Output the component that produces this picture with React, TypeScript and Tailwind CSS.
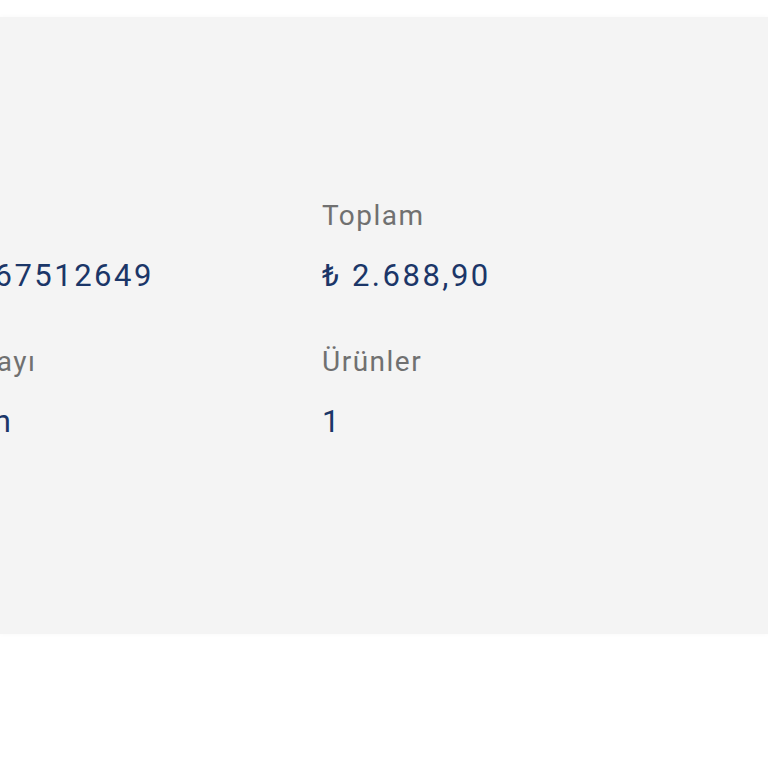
import React from "react";

interface SummaryItem {
  label: string;
  value: string;
}

const items: SummaryItem[] = [
  { label: "Sipariş", value: "100000067512649" },
  { label: "Toplam", value: "₺ 2.688,90" },
  { label: "Sipariş Onayı", value: "Onay alan" },
  { label: "Ürünler", value: "1" },
];

const App: React.FC = () => {
  return (
    <div className="w-[768px] h-[768px] bg-white overflow-hidden font-['Roboto','Liberation_Sans',sans-serif]">
      {/* ORDER SUMMARY */}
      <section className="mt-[17px] h-[617px] bg-[#f4f4f4] pt-[181px] shadow-[0_0_5px_rgba(0,0,0,0.03)]">
        <div className="ml-[-145px] grid grid-cols-[467px_auto] gap-y-[50px]">
          {items.map((item) => (
            <div key={item.label} className="whitespace-nowrap">
              <div className="text-[28px] leading-[36px] tracking-[1.5px] text-[#707070]">
                {item.label}
              </div>
              <div className="mt-[24px] text-[31px] leading-[36px] tracking-[2.5px] text-[#1b3668]">
                {item.value}
              </div>
            </div>
          ))}
        </div>
      </section>
    </div>
  );
};

export default App;
